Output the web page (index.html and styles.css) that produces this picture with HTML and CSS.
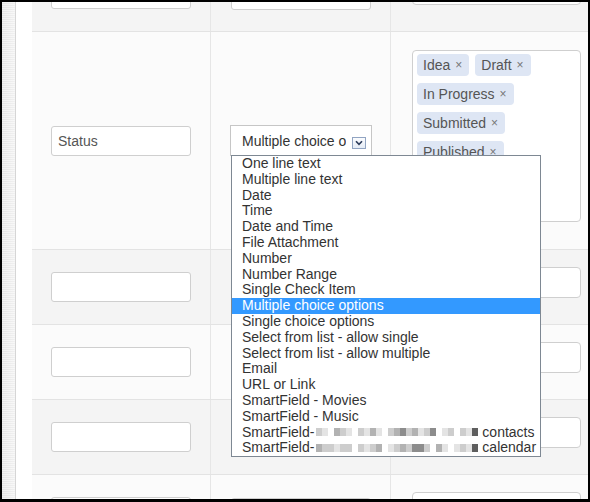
FILE: index.html
```html
<!DOCTYPE html>
<html>
<head>
<meta charset="utf-8">
<link rel="stylesheet" href="styles.css">
</head>
<body>
<div class="screen">
  <div class="sidebar"></div>
  <div class="gutter"></div>
  <div class="table">
    <div class="row row-a alt">
      <div class="cell c1"><div class="input"></div></div>
      <div class="cell c2"><div class="field"></div></div>
      <div class="cell c3"><div class="box"></div></div>
    </div>
    <div class="row row-b">
      <div class="cell c1"><div class="input">Status</div></div>
      <div class="cell c2">
        <div class="select">
          <span class="sel-text">Multiple choice options</span>
          <span class="sel-btn"><svg width="8" height="6" viewBox="0 0 8 6"><path d="M1 1.2 L4 4.4 L7 1.2" fill="none" stroke="#2b3b5a" stroke-width="1.6"/></svg></span>
        </div>
      </div>
      <div class="cell c3">
        <div class="tagbox">
          <span class="tag">Idea<span class="x">×</span></span>
          <span class="tag">Draft<span class="x">×</span></span>
          <span class="tag">In Progress<span class="x">×</span></span>
          <span class="tag">Submitted<span class="x">×</span></span>
          <span class="tag">Published<span class="x">×</span></span>
        </div>
      </div>
    </div>
    <div class="row alt">
      <div class="cell c1"><div class="input"></div></div>
      <div class="cell c2"><div class="field"></div></div>
      <div class="cell c3"><div class="box"></div></div>
    </div>
    <div class="row">
      <div class="cell c1"><div class="input"></div></div>
      <div class="cell c2"><div class="field"></div></div>
      <div class="cell c3"><div class="box"></div></div>
    </div>
    <div class="row alt">
      <div class="cell c1"><div class="input"></div></div>
      <div class="cell c2"><div class="field"></div></div>
      <div class="cell c3"><div class="box"></div></div>
    </div>
    <div class="row">
      <div class="cell c1"><div class="input"></div></div>
      <div class="cell c2"><div class="field"></div></div>
      <div class="cell c3"><div class="box"></div></div>
    </div>
  </div>
  <div class="dropdown">
    <div class="opt">One line text</div>
    <div class="opt">Multiple line text</div>
    <div class="opt">Date</div>
    <div class="opt">Time</div>
    <div class="opt">Date and Time</div>
    <div class="opt">File Attachment</div>
    <div class="opt">Number</div>
    <div class="opt">Number Range</div>
    <div class="opt">Single Check Item</div>
    <div class="opt sel">Multiple choice options</div>
    <div class="opt">Single choice options</div>
    <div class="opt">Select from list - allow single</div>
    <div class="opt">Select from list - allow multiple</div>
    <div class="opt">Email</div>
    <div class="opt">URL or Link</div>
    <div class="opt">SmartField - Movies</div>
    <div class="opt">SmartField - Music</div>
    <div class="opt">SmartField-<span class="mz"><i class="m2"></i><i class="m1"></i><i class="m0"></i><i class="m3"></i><i class="m2"></i><i class="m1"></i><i class="m0"></i><i class="m2"></i><i class="m1"></i><i class="m3"></i><i class="m1"></i><i class="m0"></i><i class="m2"></i><i class="m3"></i><i class="m4"></i><i class="m2"></i><i class="m3"></i><i class="m1"></i><i class="m2"></i><i class="m4"></i><i class="m0"></i><i class="m1"></i><i class="m2"></i><i class="m0"></i><i class="m2"></i><i class="m1"></i><i class="m5"></i></span><span class="after">contacts</span></div>
    <div class="opt">SmartField-<span class="mz"><i class="m3"></i><i class="m2"></i><i class="m2"></i><i class="m1"></i><i class="m2"></i><i class="m2"></i><i class="m0"></i><i class="m2"></i><i class="m1"></i><i class="m2"></i><i class="m3"></i><i class="m0"></i><i class="m1"></i><i class="m2"></i><i class="m3"></i><i class="m2"></i><i class="m4"></i><i class="m4"></i><i class="m2"></i><i class="m0"></i><i class="m3"></i><i class="m1"></i><i class="m0"></i><i class="m1"></i><i class="m2"></i><i class="m1"></i><i class="m5"></i></span><span class="after">calendar</span></div>
  </div>
</div>
</body>
</html>
```

FILE: styles.css
```css
* { box-sizing: border-box; }
html, body { margin: 0; padding: 0; background: #000; }
body { font-family: "Liberation Sans", Arial, sans-serif; }

.screen {
  position: relative;
  width: 590px;
  height: 502px;
  border: 2px solid #000;
  border-bottom-width: 3px;
  display: flex;
  overflow: hidden;
  background: #fff;
}

.sidebar {
  width: 14px;
  flex: none;
  border-right: 1px solid #d6d6d6;
  background-color: #ececec;
  background-image:
    repeating-linear-gradient(0deg, rgba(255,255,255,0.5) 0 1px, rgba(0,0,0,0) 1px 2px),
    linear-gradient(to right, #e3e3e3, #f1f1f1);
}

.gutter { width: 16px; flex: none; background: #fff; }

.table {
  flex: 1;
  display: flex;
  flex-direction: column;
  overflow: hidden;
}

.row {
  display: flex;
  flex: none;
  height: 75px;
  border-bottom: 1px solid #e3e3e3;
  background: #fbfbfb;
}
.row.alt { background: #f4f4f4; }
.row-a { margin-top: -45px; }
.row-b { height: 218px; }

.cell { display: flex; }
.c1 {
  width: 179px;
  border-right: 1px solid #e6e6e6;
  align-items: center;
  padding-left: 19px;
}
.c2 {
  width: 180px;
  border-right: 1px solid #e6e6e6;
  align-items: center;
  padding-left: 20px;
}
.c3 {
  flex: 1;
  align-items: flex-start;
  padding: 17px 0 0 21px;
}
.row-b .c3 { padding-top: 18px; }

.input {
  width: 140px;
  height: 30px;
  border: 1px solid #cfcfcf;
  border-radius: 3px;
  background: #fff;
  font-size: 14px;
  color: #555;
  padding-left: 6px;
  line-height: 28px;
}

.field {
  width: 140px;
  height: 30px;
  border: 1px solid #cfcfcf;
  border-radius: 3px;
  background: #fff;
  margin-top: 2px;
}

.select {
  width: 142px;
  height: 31px;
  margin-left: -1px;
  border: 1px solid #c6c6c6;
  background: #fff;
  display: flex;
  align-items: center;
  padding-left: 11px;
}
.sel-text {
  width: 104px;
  flex: none;
  overflow: hidden;
  white-space: nowrap;
  font-size: 14px;
  color: #333;
}
.sel-btn {
  width: 14px;
  height: 12px;
  flex: none;
  margin: 5px 0 0 6px;
  border: 1px solid #91a4c2;
  background: linear-gradient(#fbfcfe, #e4ebf5);
  display: flex;
  align-items: center;
  justify-content: center;
}
.sel-btn svg { display: block; }

.box {
  width: 169px;
  height: 31px;
  border: 1px solid #cfcfcf;
  border-radius: 4px;
  background: #fff;
}

.tagbox {
  width: 169px;
  height: 172px;
  border: 1px solid #cfcfcf;
  border-radius: 4px;
  background: #fff;
  padding: 3px 4px;
  display: flex;
  flex-wrap: wrap;
  align-content: flex-start;
  gap: 7px 6px;
}
.tag {
  height: 22px;
  line-height: 22px;
  padding: 0 7px 0 6px;
  background: #dee6f4;
  border-radius: 4px;
  color: #555;
  font-size: 14px;
  display: flex;
  align-items: center;
  white-space: nowrap;
}
.tag .x {
  margin-left: 5px;
  font-size: 12px;
  color: #777;
}

.dropdown {
  position: absolute;
  left: 229px;
  top: 153px;
  width: 310px;
  height: 302px;
  border: 1px solid #7e8893;
  background: #fff;
  font-size: 14px;
  color: #333;
  overflow: hidden;
}
.opt {
  height: 15.8px;
  line-height: 15.8px;
  padding-left: 10px;
  white-space: nowrap;
  display: flex;
  align-items: center;
}
.opt.sel { background: #3399ff; color: #fff; }

.mz {
  display: flex;
  margin-left: 2px;
}
.mz i {
  display: block;
  width: 6px;
  height: 8px;
}
.m0 { background: transparent; }
.m1 { background: #e4e4e4; }
.m2 { background: #cdcdcd; }
.m3 { background: #b2b2b2; }
.m4 { background: #8c8c8c; }
.m5 { background: #5e5e5e; }
.after { margin-left: 4px; }
```
